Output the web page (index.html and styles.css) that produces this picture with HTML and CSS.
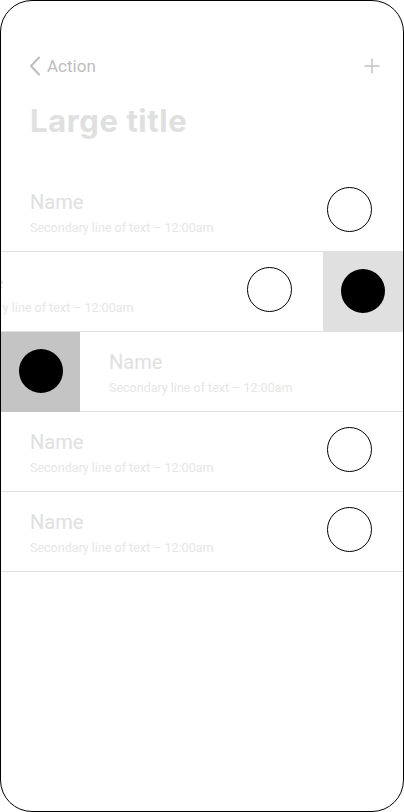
FILE: index.html
```html
<!DOCTYPE html>
<html lang="en">
<head>
<meta charset="utf-8">
<title>List</title>
<link rel="stylesheet" href="styles.css">
</head>
<body>
<div class="phone">
  <header class="nav">
    <a class="back">
      <svg class="chev" width="12" height="20" viewBox="0 0 12 20"><path d="M10 1.5 L2 10 L10 18.5" fill="none" stroke="#bdbdbd" stroke-width="2" stroke-linecap="round" stroke-linejoin="round"/></svg>
      <span>Action</span>
    </a>
    <svg class="plus" width="16" height="16" viewBox="0 0 16 16"><path d="M8 0.5 V15.5 M0.5 8 H15.5" stroke="#c4c4c4" stroke-width="1.5"/></svg>
  </header>
  <h1 class="title">Large title</h1>
  <ul class="list">
    <li class="row">
      <div class="content">
        <div class="text"><div class="name">Name</div><div class="sub">Secondary line of text – 12:00am</div></div>
        <span class="circle"></span>
      </div>
    </li>
    <li class="row row-left">
      <div class="content">
        <div class="text"><div class="name">Name</div><div class="sub">Secondary line of text – 12:00am</div></div>
        <span class="circle"></span>
      </div>
      <div class="action action-light"><span class="dot"></span></div>
    </li>
    <li class="row row-right">
      <div class="action action-dark"><span class="dot"></span></div>
      <div class="content">
        <div class="text"><div class="name">Name</div><div class="sub">Secondary line of text – 12:00am</div></div>
      </div>
    </li>
    <li class="row">
      <div class="content">
        <div class="text"><div class="name">Name</div><div class="sub">Secondary line of text – 12:00am</div></div>
        <span class="circle"></span>
      </div>
    </li>
    <li class="row">
      <div class="content">
        <div class="text"><div class="name">Name</div><div class="sub">Secondary line of text – 12:00am</div></div>
        <span class="circle"></span>
      </div>
    </li>
  </ul>
</div>
</body>
</html>
```
FILE: styles.css
```css
* { box-sizing: border-box; }
html, body { margin: 0; padding: 0; background: #fff; }
body { font-family: Roboto, "Liberation Sans", sans-serif; }

.phone {
  width: 404px;
  height: 812px;
  border: 1px solid #000;
  border-radius: 32px;
  overflow: hidden;
  background: #fff;
}

.nav {
  margin-top: 43px;
  height: 44px;
  display: flex;
  align-items: center;
  justify-content: space-between;
  padding: 0 23px 0 28px;
}
.back {
  display: flex;
  align-items: center;
  gap: 6px;
  color: #bdbdbd;
  font-size: 17px;
}
.chev { display: block; }
.plus { display: block; }

.title {
  margin: 15px 0 0 29px;
  font-family: Inter, Roboto, sans-serif;
  font-weight: 700;
  font-size: 31px;
  line-height: 36px;
  color: #e0e0e0;
  letter-spacing: 0.6px;
}

.list {
  list-style: none;
  margin: 33px 0 0;
  padding: 0;
}
.row {
  display: flex;
  height: 80px;
  border-bottom: 1px solid #e0e0e0;
}
.content {
  flex: none;
  width: 402px;
  display: flex;
  justify-content: space-between;
  align-items: flex-start;
  padding: 0 31px 0 29px;
}
.row-left .content { margin-left: -80px; }

.text { margin-top: 18px; }
.name {
  font-size: 20px;
  line-height: 24px;
  color: #e0e0e0;
}
.sub {
  margin-top: 6px;
  font-size: 12.5px;
  line-height: 16px;
  color: #e6e6e6;
}
.circle {
  margin-top: 15px;
  width: 45px;
  height: 45px;
  border: 1px solid #000;
  border-radius: 50%;
}

.action {
  flex: none;
  width: 80px;
  height: 80px;
  display: flex;
  align-items: center;
  justify-content: center;
}
.action-light { background: #e0e0e0; margin-top: -1px; }
.action-dark { background: #c4c4c4; width: 79px; padding-bottom: 3px; }
.dot {
  width: 44px;
  height: 44px;
  border-radius: 50%;
  background: #000;
}
```
